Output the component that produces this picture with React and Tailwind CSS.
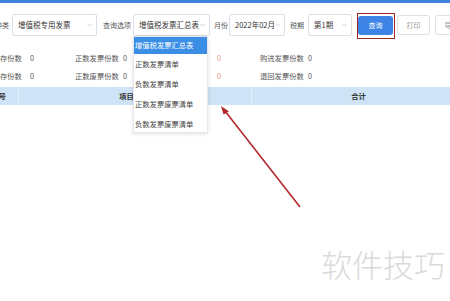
const font = { fontFamily: '"Noto Sans CJK SC", "Noto Sans", sans-serif' };

function Caret() {
  return (
    <svg width="5" height="4" viewBox="0 0 5 4" className="shrink-0">
      <path d="M0.5 1 L2.5 3 L4.5 1" fill="none" stroke="#c0c4cc" strokeWidth="0.8" />
    </svg>
  );
}

function Select({ value, className }) {
  return (
    <div
      className={`flex h-[22px] shrink-0 items-center justify-between rounded-[2px] border border-[#dcdfe6] bg-white pl-[5px] pr-[4px] text-[7.5px] text-[#333] ${className}`}
    >
      <span className="whitespace-nowrap">{value}</span>
      <Caret />
    </div>
  );
}

function Label({ children, className }) {
  return (
    <span className={`shrink-0 whitespace-nowrap text-[7px] text-[#555] ${className}`}>
      {children}
    </span>
  );
}

function Stat({ label, value, labelW, colW, ml, valueColor = "text-[#555]" }) {
  return (
    <div className={`flex shrink-0 items-center ${colW} ${ml}`}>
      <span className={`whitespace-nowrap text-[7.3px] text-[#555] ${labelW}`}>{label}</span>
      <span className={`text-[7.3px] ${valueColor}`}>{value}</span>
    </div>
  );
}

const options = ["正数发票清单", "负数发票清单", "正数发票废票清单", "负数发票废票清单"];

export default function App() {
  return (
    <div className="relative h-[301px] w-[450px] overflow-hidden bg-white" style={font}>
      <div className="h-[3px] bg-[#3f82db]" />

      <div className="mt-[11px] flex items-center">
        <Label className="ml-[-19px] w-[28px]">发票种类</Label>
        <Select value="增值税专用发票" className="ml-[3px] w-[85px]" />
        <Label className="ml-[6px] w-[28px]">查询选项</Label>
        <Select value="增值税发票汇总表" className="ml-[2px] w-[77px]" />
        <Label className="ml-[4px] w-[14px]">月份</Label>
        <Select value="2022年02月" className="ml-[1px] w-[56px]" />
        <Label className="ml-[5px] w-[14px]">税期</Label>
        <Select value="第1期" className="ml-[4px] w-[44px]" />
        <button className="ml-[6px] flex h-[19px] w-[35px] shrink-0 items-center justify-center rounded-[3px] bg-[#3d84e6] text-[7px] text-white">
          查询
        </button>
        <button className="ml-[4px] flex h-[20px] w-[33px] shrink-0 items-center justify-center rounded-[3px] border border-[#dcdfe6] bg-white text-[7px] text-[#999]">
          打印
        </button>
        <button className="ml-[5px] flex h-[20px] w-[33px] shrink-0 items-center justify-center rounded-[3px] border border-[#dcdfe6] bg-white text-[7px] text-[#999]">
          导出
        </button>
      </div>

      <div className="mt-[13px]">
        <div className="flex h-[18px] items-center">
          <Stat label="期初库存份数" value="0" ml="ml-[-22px]" colW="w-[97px]" labelW="w-[52px]" />
          <Stat label="正数发票份数" value="0" ml="" colW="w-[85px]" labelW="w-[48px]" />
          <Stat label="负数发票份数" value="0" ml="" colW="w-[100px]" labelW="w-[57px]" valueColor="text-[#ee9a86]" />
          <Stat label="购进发票份数" value="0" ml="" colW="w-[90px]" labelW="w-[48px]" />
        </div>
        <div className="flex h-[18px] items-center">
          <Stat label="期末库存份数" value="0" ml="ml-[-22px]" colW="w-[97px]" labelW="w-[52px]" />
          <Stat label="正数废票份数" value="0" ml="" colW="w-[85px]" labelW="w-[48px]" />
          <Stat label="负数废票份数" value="0" ml="" colW="w-[100px]" labelW="w-[57px]" valueColor="text-[#ee9a86]" />
          <Stat label="退回发票份数" value="0" ml="" colW="w-[90px]" labelW="w-[48px]" />
        </div>
      </div>

      <div className="mt-[2px] flex h-[18px] items-center bg-[#cfe3f6] text-[7.3px] font-bold text-[#333]">
        <div className="flex h-full w-[18px] shrink-0 items-center justify-end pr-[12px]">
          <span className="whitespace-nowrap">序号</span>
        </div>
        <div className="flex h-full w-[233px] shrink-0 items-center justify-center border-l border-[#e2eefa] pr-[17px]">
          项目
        </div>
        <div className="flex h-full w-[214px] shrink-0 items-center justify-center border-l border-[#e2eefa]">
          合计
        </div>
      </div>

      <div className="absolute left-[133px] top-[36px] h-[97px] w-[75px] border border-[#e4e7ed] bg-white shadow-[0_1px_4px_rgba(0,0,0,0.12)]">
        <div className="flex h-[17px] items-center bg-[#3a8ee6] pl-[1px] text-[7.3px] text-white">
          增值税发票汇总表
        </div>
        {options.map((o) => (
          <div key={o} className="flex h-[20px] items-center pl-[1px] text-[7.3px] text-[#444]">
            {o}
          </div>
        ))}
      </div>

      <div className="absolute left-[357px] top-[13px] h-[26px] w-[38px] border border-[#9b2a2a]" />

      <svg className="absolute left-0 top-0" width="450" height="301" viewBox="0 0 450 301">
        <line x1="300" y1="207" x2="225" y2="111" stroke="#b3282c" strokeWidth="1.6" />
        <path d="M221 106 L229 111.5 L223.5 114.5 Z" fill="#b3282c" />
      </svg>

      <div className="absolute left-[321px] top-[248px] whitespace-nowrap text-[31px] font-light leading-none text-[#dadada]">
        软件技巧
      </div>
    </div>
  );
}
